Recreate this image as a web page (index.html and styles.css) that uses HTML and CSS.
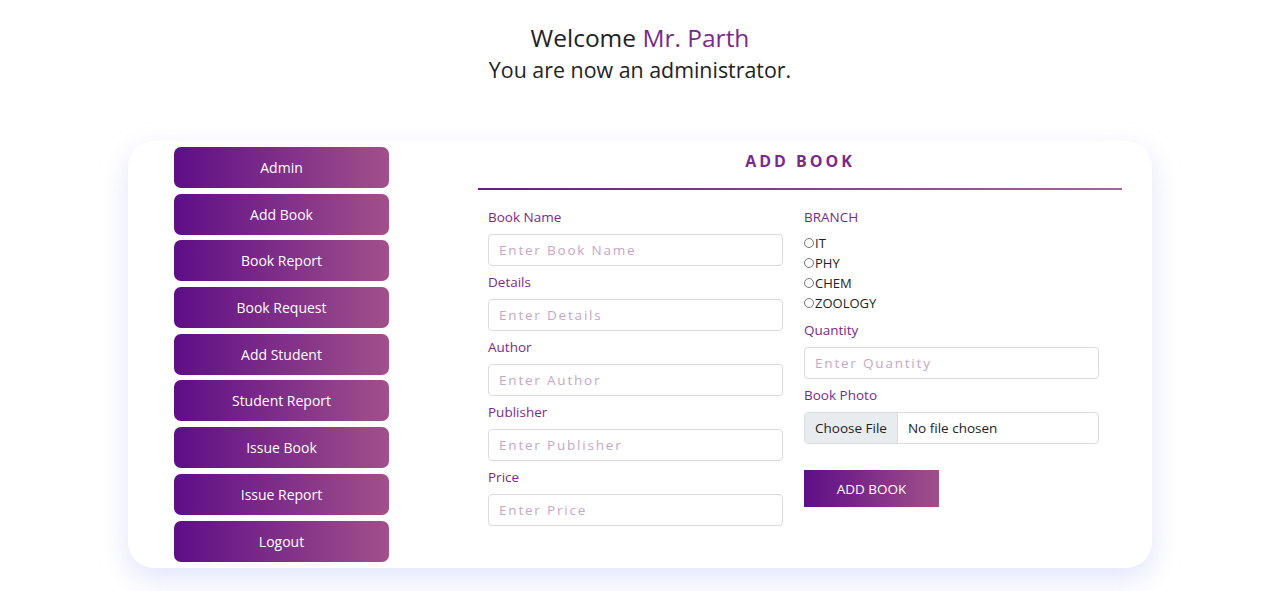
FILE: index.html
```html
<!DOCTYPE html>
<html>
<head>
<meta charset="utf-8">
<link rel="stylesheet" href="styles.css">
</head>
<body>
<header class="welcome">
  <h1 class="title">Welcome <span class="name">Mr. Parth</span></h1>
  <p class="subtitle">You are now an administrator.</p>
</header>
<main class="card">
  <nav class="sidebar">
    <a class="nav-btn">Admin</a>
    <a class="nav-btn">Add Book</a>
    <a class="nav-btn">Book Report</a>
    <a class="nav-btn">Book Request</a>
    <a class="nav-btn">Add Student</a>
    <a class="nav-btn">Student Report</a>
    <a class="nav-btn">Issue Book</a>
    <a class="nav-btn">Issue Report</a>
    <a class="nav-btn">Logout</a>
  </nav>
  <section class="panel">
    <h2 class="panel-title">ADD BOOK</h2>
    <div class="divider"></div>
    <form class="form">
      <div class="col">
        <label class="label">Book Name</label>
        <input class="input" placeholder="Enter Book Name">
        <label class="label">Details</label>
        <input class="input" placeholder="Enter Details">
        <label class="label">Author</label>
        <input class="input" placeholder="Enter Author">
        <label class="label">Publisher</label>
        <input class="input" placeholder="Enter Publisher">
        <label class="label">Price</label>
        <input class="input" placeholder="Enter Price">
      </div>
      <div class="col">
        <label class="label branch">BRANCH</label>
        <div class="radios">
          <label class="radio"><input type="radio" name="b">IT</label>
          <label class="radio"><input type="radio" name="b">PHY</label>
          <label class="radio"><input type="radio" name="b">CHEM</label>
          <label class="radio"><input type="radio" name="b">ZOOLOGY</label>
        </div>
        <label class="label">Quantity</label>
        <input class="input" placeholder="Enter Quantity">
        <label class="label">Book Photo</label>
        <div class="file">
          <span class="file-btn">Choose File</span>
          <span class="file-name">No file chosen</span>
        </div>
        <button type="button" class="submit">ADD BOOK</button>
      </div>
    </form>
  </section>
</main>
</body>
</html>
```
FILE: styles.css
```css
* { box-sizing: border-box; }
html, body { margin: 0; padding: 0; background: #fff; }
body {
  font-family: "Open Sans", "Noto Sans", sans-serif;
  color: #212121;
  width: 1280px;
  height: 591px;
  overflow: hidden;
}
.welcome {
  text-align: center;
  padding-top: 22px;
  height: 141px;
}
.title {
  margin: 0;
  font-size: 24.5px;
  font-weight: 400;
  line-height: 32px;
  color: #222;
}
.name { color: #7a2a8a; }
.subtitle {
  margin: 1px 0 0;
  font-size: 21.4px;
  line-height: 30px;
  color: #222;
}
.card {
  margin: 0 128px;
  width: 1024px;
  height: 427px;
  background: #fff;
  border-radius: 26px;
  box-shadow: 0 10px 28px rgba(175, 185, 240, 0.4);
  display: flex;
  padding: 6px 0 0 46px;
}
.sidebar {
  width: 215px;
  display: flex;
  flex-direction: column;
  gap: 5.7px;
}
.nav-btn {
  display: flex;
  align-items: center;
  justify-content: center;
  height: 41px;
  border-radius: 7px;
  background: linear-gradient(90deg, #5e0e86 0%, #a1508a 100%);
  color: #fff;
  font-size: 14px;
}
.panel {
  margin-left: 89px;
  width: 644px;
}
.panel-title {
  margin: 0;
  font-size: 16px;
  font-weight: 700;
  letter-spacing: 3px;
  color: #7a2a8d;
  line-height: 26px;
  height: 40px;
  padding-bottom: 12px;
  display: flex;
  align-items: center;
  justify-content: center;
}
.divider {
  height: 2px;
  margin-top: 1px;
  background: linear-gradient(90deg, #6b1a8a, #a5649a);
}
.form {
  display: flex;
  gap: 21px;
  padding: 19px 0 0 10px;
}
.col {
  width: 295px;
  display: flex;
  flex-direction: column;
}
.label {
  font-size: 13.5px;
  line-height: 17px;
  color: #7a2a8a;
  margin-bottom: 8px;
  font-weight: 500;
}
.branch { margin-bottom: 7px; }
.input {
  width: 295px;
  height: 32px;
  border: 1px solid #dcdcdc;
  border-radius: 4px;
  padding: 0 10px;
  font-family: inherit;
  font-size: 13.5px;
  letter-spacing: 1.8px;
  margin-bottom: 8px;
  outline: none;
}
.input::placeholder { color: #c2a8c8; }
.radios {
  display: flex;
  flex-direction: column;
  margin-bottom: 9px;
}
.radio {
  display: flex;
  align-items: center;
  font-size: 13px;
  line-height: 20px;
  color: #222;
}
.radio input {
  margin: 0 1px 0 0;
  width: 10px;
  height: 10px;
}
.file {
  display: flex;
  height: 32px;
  border: 1px solid #dcdcdc;
  border-radius: 4px;
  overflow: hidden;
  font-size: 13.5px;
  margin-bottom: 26px;
}
.file-btn {
  background: #e9ecef;
  padding: 0 10px;
  display: flex;
  align-items: center;
  border-right: 1px solid #dcdcdc;
  color: #222;
}
.file-name {
  display: flex;
  align-items: center;
  padding-left: 10px;
  color: #222;
}
.submit {
  width: 135px;
  height: 37px;
  border: 0;
  background: linear-gradient(90deg, #5e0e86 0%, #a1508a 100%);
  color: #fff;
  font-family: inherit;
  font-size: 13.5px;
  cursor: pointer;
}
```
